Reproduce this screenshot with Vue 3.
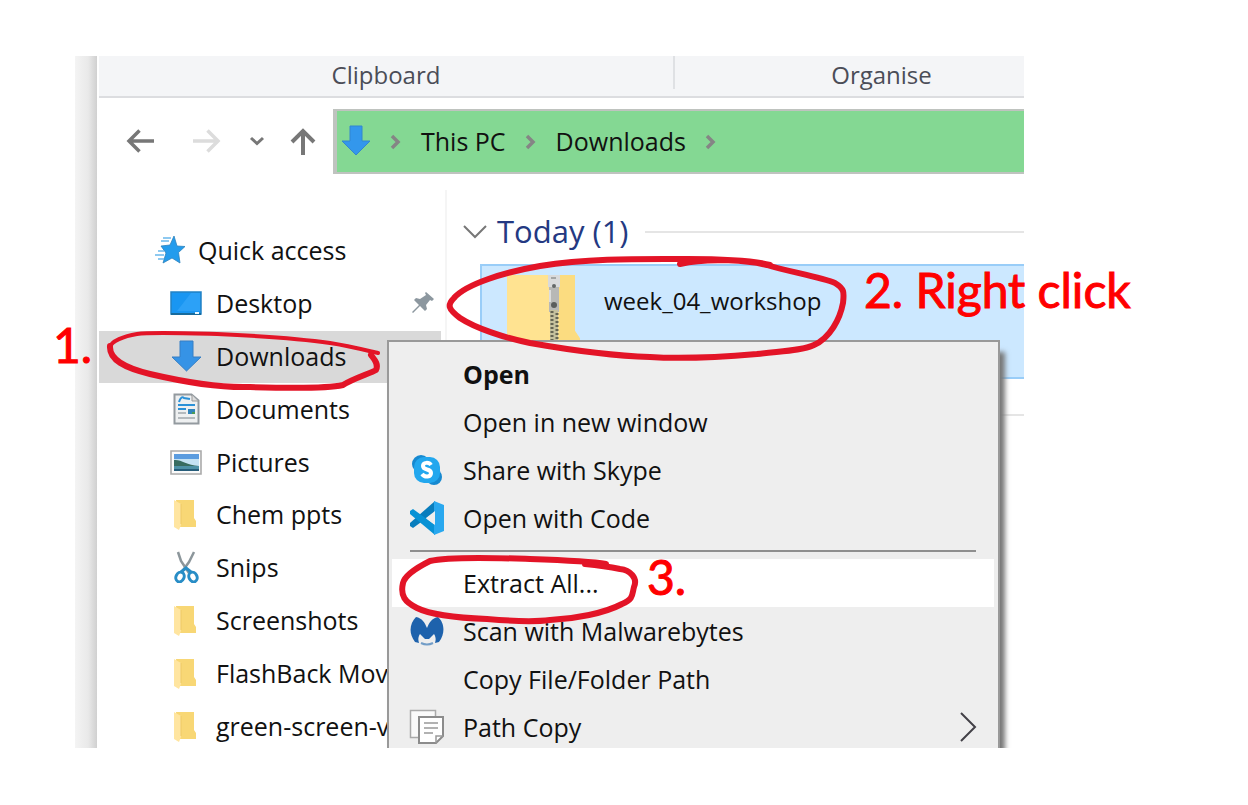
<script setup>
const places = [
  { name: 'Quick access', icon: 'star', root: true },
  { name: 'Desktop', icon: 'desktop', pinned: true },
  { name: 'Downloads', icon: 'arrow', selected: true },
  { name: 'Documents', icon: 'document' },
  { name: 'Pictures', icon: 'picture' },
  { name: 'Chem ppts', icon: 'folder' },
  { name: 'Snips', icon: 'scissors' },
  { name: 'Screenshots', icon: 'folder' },
  { name: 'FlashBack Movies', icon: 'folder' },
  { name: 'green-screen-videos', icon: 'folder' },
]

const commands = [
  { name: 'Open', main: true },
  { name: 'Open in new window' },
  { name: 'Share with Skype', icon: 'skype' },
  { name: 'Open with Code', icon: 'code' },
  { separator: true },
  { name: 'Extract All...', active: true },
  { name: 'Scan with Malwarebytes', icon: 'malwarebytes' },
  { name: 'Copy File/Folder Path' },
  { name: 'Path Copy', icon: 'pages', submenu: true },
]
</script>

<template>
  <main class="page">
    <section class="window">
      <div class="edge"></div>
      <div class="explorer">
        <header class="ribbon">
          <div class="ribbon-group clipboard">Clipboard</div>
          <div class="ribbon-group organise">Organise</div>
        </header>

        <nav class="toolbar" aria-label="Navigation">
          <button class="nav back" aria-label="Back">
            <svg width="30" height="30" viewBox="0 0 30 30"><path d="M28 15H3M13.500 4.500L3 15l10.500 10.500" fill="none" stroke="#777" stroke-width="3.500" /></svg>
          </button>
          <button class="nav forward" aria-label="Forward">
            <svg width="30" height="30" viewBox="0 0 30 30"><path d="M2 15h25M16.500 4.500L27 15 16.500 25.500" fill="none" stroke="#dcdcdc" stroke-width="3.500" /></svg>
          </button>
          <button class="nav recent" aria-label="Recent locations">
            <svg width="16" height="12" viewBox="0 0 16 12"><path d="M2 3l6 5.500L14 3" fill="none" stroke="#777" stroke-width="3" /></svg>
          </button>
          <button class="nav up" aria-label="Up">
            <svg width="28" height="30" viewBox="0 0 28 30"><path d="M14 29V4M3 16L14 5l11 11" fill="none" stroke="#777" stroke-width="4" /></svg>
          </button>
          <div class="address">
            <svg width="30" height="32" viewBox="0 0 30 32"><path d="M9 1h12v15h8L15 30 1 16h8z" fill="#3397ec" stroke="#3386cf" /></svg>
            <svg class="crumb-sep" width="12" height="16" viewBox="0 0 12 16"><path d="M2 2l6 6-6 6" fill="none" stroke="#858585" stroke-width="3.500" /></svg>
            <a href="#pc">This PC</a>
            <svg class="crumb-sep" width="12" height="16" viewBox="0 0 12 16"><path d="M2 2l6 6-6 6" fill="none" stroke="#858585" stroke-width="3.500" /></svg>
            <a href="#downloads">Downloads</a>
            <svg class="crumb-sep" width="12" height="16" viewBox="0 0 12 16"><path d="M2 2l6 6-6 6" fill="none" stroke="#858585" stroke-width="3.500" /></svg>
          </div>
        </nav>

        <div class="body">
          <aside class="places">
            <a
              v-for="place in places"
              :key="place.name"
              :href="'#' + place.icon"
              class="place"
              :class="{ root: place.root, selected: place.selected }"
            >
              <svg v-if="place.icon === 'star'" class="place-icon" viewBox="0 0 32 32">
                <path d="M20 2l3 10 8 .500-6.500 6L26 29l-8-5-9 5 3-10-5-7 9-1z" fill="#239ced" stroke="#2c82bd" stroke-width=".8" />
                <path d="M9 4h8M7 7h8M4 17h6M1 21h9M4 25h6" stroke="#69b8eb" stroke-width="1.500" />
              </svg>
              <svg v-else-if="place.icon === 'desktop'" class="place-icon" viewBox="0 0 32 32">
                <path d="M1 5h30v22H1z" fill="#1996f2" stroke="#2382c5" stroke-width="1.500" />
                <path d="M21 6h9v18H7z" fill="#38a9fa" opacity=".6" /><path d="M1 27h30" stroke="#176b9d" stroke-width="2" /><path d="M25 26h4" stroke="#e8f8ff" stroke-width="2" />
              </svg>
              <svg v-else-if="place.icon === 'arrow'" class="place-icon" viewBox="0 0 32 32">
                <path d="M10 1h13v16h8L16.500 31 2 17h8z" fill="#3693e6" stroke="#367fc4" />
              </svg>
              <svg v-else-if="place.icon === 'document'" class="place-icon" viewBox="0 0 32 32">
                <path d="M4.500 1.500h17l7 6v23h-24z" fill="#eef0f1" stroke="#939a9f" stroke-width="2" /><path d="M22 2v6h6" fill="#ddd" stroke="#999" />
                <path d="M9 9c2-6 4-5 5-4l6 1M8 12h17M8 16h8" fill="none" stroke="#2c91d7" stroke-width="2" /><path d="M18 16h7v5h-7z" fill="#3285bb" /><path d="M22 19h3v2h-3z" fill="#4b9b57" /><path d="M8 20h8M8 25h17" stroke="#a1a8ad" stroke-width="1.500" />
              </svg>
              <svg v-else-if="place.icon === 'picture'" class="place-icon" viewBox="0 0 32 32">
                <path d="M1 5h30v23H1z" fill="#fafafa" stroke="#aaa" stroke-width="1.600" /><path d="M4 8h25v17H4z" fill="#5b9cdf" /><path d="M4 13h25v7H4z" fill="#c5e2f3" /><path d="M4 14c7-1 12 5 25 6v1H4z" fill="#386c60" /><path d="M4 20h25v5H4z" fill="#4e91a6" /><path d="M4 23h25v2H4z" fill="#275d7a" />
              </svg>
              <svg v-else-if="place.icon === 'scissors'" class="place-icon" viewBox="0 0 32 32">
                <path d="M8 1l3 9 8 12M24 1l-5 10-8 11" fill="none" stroke="#8c969b" stroke-width="2.500" /><g fill="none" stroke="#288dc6" stroke-width="3"><ellipse cx="10" cy="26" rx="4" ry="5" transform="rotate(25 10 26)" /><ellipse cx="23" cy="26" rx="4" ry="5" transform="rotate(-25 23 26)" /><path d="M11 21l5-4 5 4" /></g>
              </svg>
              <svg v-else class="place-icon" viewBox="0 0 32 32">
                <path d="M6 2h18v18l2 3v6H8z" fill="#f8d775" /><path d="M4 2l7 4v21l-2 5-5-3z" fill="#ffe5a0" /><path d="M11 6v20" stroke="#edc967" />
              </svg>
              <span>{{ place.name }}</span>
              <svg v-if="place.pinned" class="pin" width="24" height="24" viewBox="0 0 24 24"><path d="M15 1l8 7-2 2-2-1-4 5 1 4-2 2-5-5-7 7-1-1 7-7-5-5 2-2 4 1 6-4-1-2z" fill="#8c979f" /></svg>
            </a>
          </aside>

          <section class="files">
            <h2 class="group">
              <svg width="24" height="14" viewBox="0 0 24 14"><path d="M1 1l11 11L23 1" fill="none" stroke="#777" stroke-width="2" /></svg>
              <span>Today (1)</span>
              <i class="rule"></i>
            </h2>
            <div class="file">
              <svg class="zip" width="74" height="82" viewBox="0 0 74 82">
                <path d="M1 0h68v56l6 9v17H1z" fill="#ffe391" /><path d="M53 0h16v56l6 9v17H53z" fill="#fbdc80" />
                <path d="M43 0h10v37H43z" fill="#b8b8b6" /><path d="M42 0h12v12H42z" fill="#d9dadb" /><path d="M45 3h5" stroke="#a3a5a5" stroke-width="2" /><circle cx="48" cy="11" r="2" fill="#646767" />
                <path d="M44 15v12" stroke="#ddd" stroke-width="2" /><circle cx="48" cy="30" r="3" fill="#5b5d5d" />
                <path d="M48 35v47" stroke="#c5c09d" stroke-width="8" /><path d="M46 36v46M51 38v44" stroke="#656453" stroke-width="3" stroke-dasharray="2 2" />
              </svg>
              <span>week_04_workshop</span>
            </div>
            <div class="next-group"></div>
          </section>
        </div>
      </div>

      <div class="menu" role="menu">
        <template v-for="(command, index) in commands" :key="index">
          <hr v-if="command.separator" />
          <button v-else role="menuitem" class="command" :class="{ main: command.main, active: command.active }">
            <span class="command-icon">
              <svg v-if="command.icon === 'skype'" width="32" height="32" viewBox="0 0 32 32">
                <circle cx="10" cy="10" r="9" fill="#1689d0" /><circle cx="23" cy="23" r="8" fill="#1689d0" /><rect x="3" y="3" width="26" height="26" rx="10" fill="#22a7ee" />
                <path d="M20 11c-2-3-8-3-8 1 0 5 8 2 8 7 0 4-6 5-9 1" fill="none" stroke="#fff" stroke-width="4" />
              </svg>
              <svg v-else-if="command.icon === 'code'" width="36" height="36" viewBox="0 0 36 36">
                <path d="M26 1L1 23v3l3 2 22-16z" fill="#087dbd" /><path d="M1 11l3-2 22 16v10L1 14z" fill="#0892d5" /><path d="M25 1l10 4v26l-10 4z" fill="#29a8ef" /><path d="M26 11v14l-9-7z" fill="#eee" />
              </svg>
              <svg v-else-if="command.icon === 'malwarebytes'" width="34" height="30" viewBox="0 0 34 30">
                <path d="M6 1c6 1 9 6 11 11C19 7 22 2 28 1c6 5 8 16 1 25l-4 1c1-3 1-6-1-9l-5 5h-4l-5-5c-2 3-2 6-1 9l-4-1C-2 17 0 7 6 1z" fill="#1e62ac" /><path d="M11 27c4 2 8 2 12 0" fill="none" stroke="#729dc7" stroke-width="2" />
              </svg>
              <svg v-else-if="command.icon === 'pages'" width="36" height="36" viewBox="0 0 36 36">
                <path d="M1.500 1.500h25v27h-25z" fill="#fafafa" stroke="#aaa" stroke-width="1.500" /><path d="M10 8h24v19l-7 7H10z" fill="#fff" stroke="#8c8c8c" stroke-width="2" /><path d="M27 34v-7h7M15 14h14M15 19h14M15 24h9" fill="none" stroke="#999" stroke-width="1.500" />
              </svg>
            </span>
            <span>{{ command.name }}</span>
            <svg v-if="command.submenu" class="submenu" width="18" height="30" viewBox="0 0 18 30"><path d="M2 1l14 14L2 29" fill="none" stroke="#424047" stroke-width="2" /></svg>
          </button>
        </template>
      </div>
    </section>

    <svg class="ink" width="1248" height="805" viewBox="0 0 1248 805" aria-hidden="true">
      <g fill="none" stroke="#e31427" stroke-linecap="round" stroke-linejoin="round">
        <path stroke-width="4" d="M378 353C373 352 350 346 330 343C295 338 260 336 217 334C180 333 150 332 137 334C125 336 110 341 110 348" />
        <path stroke-width="6" d="M110 346C109 360 125 368 150 374C180 381 220 388 250 387C280 388 325 389 343 385C352 379 371 373 376 370C379 364 374 359 371 355" />
        <path stroke-width="6" d="M680 264C710 257 750 261 767 265C790 272 820 277 835 283C845 289 844 293 843 303C840 319 830 338 814 345C801 351 781 351 757 354C710 358 680 359 650 357C615 356 570 350 530 343C505 338 475 328 460 318C448 309 447 305 454 298C466 284 505 272 540 266C590 258 640 259 687 259C730 259 755 261 770 265" />
        <path stroke-width="6" d="M606 564C590 561 560 560 530 559C500 558 450 556 430 561C418 567 405 575 403 583C400 596 405 602 417 608C431 615 460 618 487 619C510 621 535 622 550 620C575 619 605 613 622 604C634 599 632 594 634 587C638 578 630 570 620 569C605 566 595 565 585 564" />
      </g>
    </svg>
    <span class="note one">1.</span>
    <span class="note two">2. Right click</span>
    <span class="note three">3.</span>
  </main>
</template>

<style>
body {
  margin: 0;
  background: #fff;
}
</style>

<style scoped>
.page {
  position: relative;
  box-sizing: border-box;
  height: 100vh;
  padding: 56px 224px 57px 75px;
  overflow: hidden;
  background: #fff;
  color: #111;
  font-family: "Open Sans", "Noto Sans", sans-serif;
  font-size: 25px;
  line-height: 32px;
}
.window {
  position: relative;
  display: flex;
  height: 100%;
  overflow: hidden;
}
.edge {
  flex: 0 0 22px;
  margin-right: 2px;
  background: linear-gradient(90deg, #f4f4f4, #e9e9e9 60%, #d0d0d0);
}
.explorer {
  flex: 1;
  min-width: 0;
}
.ribbon {
  display: flex;
  height: 40px;
  border-bottom: 2px solid #dcdde0;
  background: #f4f5f7;
  color: #4b4d57;
  font-size: 24px;
  line-height: 38px;
  text-align: center;
}
.clipboard {
  box-sizing: border-box;
  flex: 0 0 576px;
  height: 33px;
  border-right: 2px solid #dfe1e4;
}
.organise {
  flex: 1;
  padding-left: 64px;
}
.toolbar {
  display: flex;
  align-items: center;
  height: 64px;
  padding: 11px 0 17px 27px;
}
.nav {
  display: flex;
  padding: 0;
  border: 0;
  background: none;
}
.forward {
  margin-left: 35px;
}
.recent {
  margin-left: 28px;
}
.up {
  margin: 0 16px 0 24px;
}
.address {
  display: flex;
  flex: 1;
  align-items: center;
  box-sizing: border-box;
  height: 65px;
  padding-left: 4px;
  border: solid #bfc3bf;
  border-width: 2px 0 2px 4px;
  background: #84d893;
}
.address a {
  color: #111;
  text-decoration: none;
}
.crumb-sep {
  margin: 2px 19px 0;
}
.body {
  display: flex;
  align-items: flex-start;
}
.places {
  display: grid;
  grid-template-rows: repeat(10, 1fr);
  box-sizing: border-box;
  flex: 0 0 342px;
  height: 563px;
  padding-top: 35px;
  margin-right: 6px;
  margin-right: 0;
}
.place {
  display: flex;
  align-items: center;
  box-sizing: border-box;
  min-height: 0;
  padding: 0 0 2px 71px;
  color: #111;
  text-decoration: none;
  white-space: nowrap;
  overflow: hidden;
}
.place.root {
  padding-left: 55px;
}
.place.selected {
  background: #d9d9d9;
}
.place-icon {
  flex: none;
  width: 32px;
  height: 32px;
  margin-right: 14px;
}
.root .place-icon {
  margin-right: 12px;
}
.pin {
  margin: 0 6px 0 auto;
}
.files {
  flex: 1;
  min-width: 0;
  margin-left: 4px;
  border-left: 2px solid #f5f5f5;
}
.group {
  display: flex;
  align-items: center;
  height: 40px;
  margin: 22px 0 12px 16px;
  color: #243982;
  font-size: 31px;
  font-weight: 400;
  white-space: nowrap;
}
.group span {
  margin: 0 16px 2px 10px;
}
.rule {
  flex: 1;
  height: 2px;
  background: #e5e5e5;
}
.file {
  display: flex;
  box-sizing: border-box;
  height: 115px;
  margin-left: 33px;
  padding: 9px 0 0 24px;
  border: solid #99cdf8;
  border-width: 2px 0 2px 2px;
  background: #cce8ff;
}
.file span {
  margin: 10px 0 0 24px;
  font-size: 24px;
}
.next-group {
  height: 2px;
  margin: 35px 0 0 33px;
  background: #e5e5e5;
}
.menu {
  position: absolute;
  top: 284px;
  right: 24px;
  left: 312px;
  padding: 8px 4px 8px 3px;
  border: 2px solid #999;
  background: #eee;
  box-shadow: 5px 12px 5px #777;
}
.command {
  display: flex;
  align-items: center;
  width: 100%;
  height: 48px;
  padding: 0 17px;
  border: 0;
  background: none;
  color: #111;
  font: inherit;
  text-align: left;
}
.command.main {
  font-weight: 700;
}
.command.active {
  background: #fff;
}
.command-icon {
  display: flex;
  flex: 0 0 36px;
  justify-content: center;
  margin-right: 18px;
}
.submenu {
  margin-left: auto;
}
hr {
  height: 2px;
  margin: 8px 18px 7px;
  border: 0;
  background: #8f8f8f;
}
.ink {
  position: absolute;
  top: 0;
  left: 0;
}
.note {
  position: absolute;
  color: #f00;
  font-family: Lato, sans-serif;
  font-size: 48px;
  line-height: 56px;
  white-space: nowrap;
  -webkit-text-stroke: 1px #f00;
}
.one {
  top: 317px;
  left: 53px;
}
.two {
  top: 262px;
  left: 864px;
}
.three {
  top: 549px;
  left: 647px;
}
</style>
